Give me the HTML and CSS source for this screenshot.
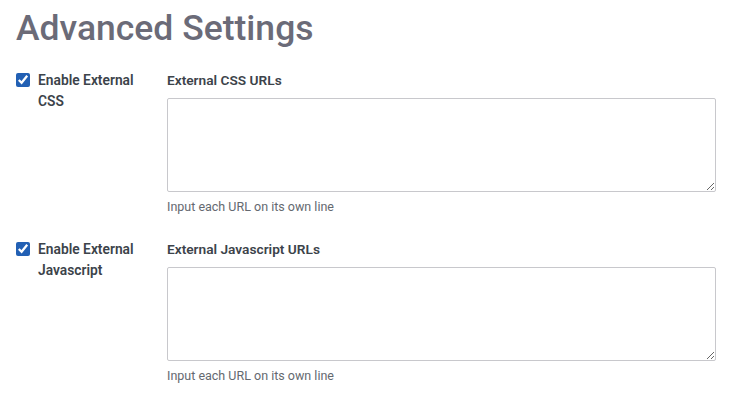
FILE: index.html
```html
<!DOCTYPE html>
<html>
<head>
  <meta charset="utf-8">
  <title>Advanced Settings</title>
  <link rel="stylesheet" href="styles.css">
</head>
<body>
  <div class="page">
    <h1>Advanced Settings</h1>

    <div class="setting-row">
      <label class="toggle">
        <input type="checkbox" checked>
        <span>Enable External CSS</span>
      </label>
      <div class="field">
        <div class="field-title">External CSS URLs</div>
        <textarea></textarea>
        <div class="help">Input each URL on its own line</div>
      </div>
    </div>

    <div class="setting-row">
      <label class="toggle">
        <input type="checkbox" checked>
        <span>Enable External Javascript</span>
      </label>
      <div class="field">
        <div class="field-title">External Javascript URLs</div>
        <textarea></textarea>
        <div class="help">Input each URL on its own line</div>
      </div>
    </div>
  </div>
</body>
</html>
```

FILE: styles.css
```css
* {
  margin: 0;
  padding: 0;
  box-sizing: border-box;
}

body {
  font-family: Roboto, "Liberation Sans", sans-serif;
  background: #fff;
  color: #3c434a;
}

.page {
  padding: 6px 15px 0 16px;
}

h1 {
  font-size: 35.5px;
  font-weight: 500;
  color: #6b6b78;
  line-height: 44px;
  margin-bottom: 20px;
}

.setting-row {
  display: grid;
  grid-template-columns: 151px 1fr;
  margin-bottom: 24px;
}

.toggle {
  display: flex;
  align-items: flex-start;
  gap: 8px;
  font-size: 13.8px;
  font-weight: 600;
  line-height: 21px;
  padding-right: 14px;
}

.toggle input {
  width: 14px;
  height: 14px;
  margin-top: 3px;
  accent-color: #2260b4;
  flex-shrink: 0;
}

.field-title {
  font-size: 13.7px;
  font-weight: 600;
  line-height: 20px;
  margin-bottom: 8px;
}

textarea {
  display: block;
  width: 100%;
  height: 94px;
  border: 1px solid #c8c8cc;
  border-radius: 2px;
  resize: vertical;
  font-family: inherit;
}

.help {
  font-size: 12.5px;
  color: #646970;
  margin-top: 7px;
  line-height: 16px;
}
```
